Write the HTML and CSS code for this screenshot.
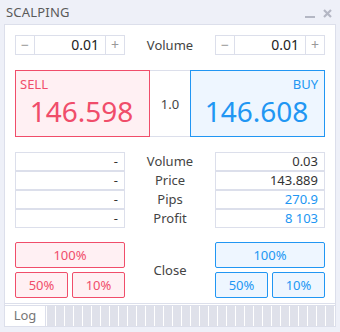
FILE: index.html
```html
<!DOCTYPE html>
<html lang="en">
<head>
  <meta charset="UTF-8">
  <title>Scalping</title>
  <link rel="stylesheet" href="styles.css">
</head>
<body>
  <div class="window">
    <div class="titlebar">
      <span class="title">SCALPING</span>
      <span class="controls">
        <svg width="30" height="12" viewBox="0 0 30 12">
          <rect x="1" y="8" width="10" height="2" fill="#b4b7c4"/>
          <path d="M20 2 L27 9 M27 2 L20 9" stroke="#b4b7c4" stroke-width="2.2"/>
        </svg>
      </span>
    </div>

    <div class="frame">
      <div class="content">
        <!-- volume steppers -->
        <div class="row">
          <div class="stepper">
            <span class="step">&minus;</span>
            <span class="step-value">0.01</span>
            <span class="step">+</span>
          </div>
          <div class="label">Volume</div>
          <div class="stepper">
            <span class="step">&minus;</span>
            <span class="step-value">0.01</span>
            <span class="step">+</span>
          </div>
        </div>

        <!-- quotes -->
        <div class="quotes">
          <div class="quote sell">
            <div class="quote-side">SELL</div>
            <div class="quote-price">146.598</div>
          </div>
          <div class="spread">1.0</div>
          <div class="quote buy">
            <div class="quote-side">BUY</div>
            <div class="quote-price">146.608</div>
          </div>
        </div>

        <!-- positions -->
        <div class="table">
          <div class="row tight">
            <div class="cell">-</div>
            <div class="label">Volume</div>
            <div class="cell">0.03</div>
          </div>
          <div class="row tight">
            <div class="cell">-</div>
            <div class="label">Price</div>
            <div class="cell">143.889</div>
          </div>
          <div class="row tight">
            <div class="cell">-</div>
            <div class="label">Pips</div>
            <div class="cell blue">270.9</div>
          </div>
          <div class="row tight">
            <div class="cell">-</div>
            <div class="label">Profit</div>
            <div class="cell blue">8 103</div>
          </div>
        </div>

        <!-- close buttons -->
        <div class="row close-row">
          <div class="close-group red">
            <button class="btn wide">100%</button>
            <button class="btn">50%</button>
            <button class="btn">10%</button>
          </div>
          <div class="label">Close</div>
          <div class="close-group blue">
            <button class="btn wide">100%</button>
            <button class="btn">50%</button>
            <button class="btn">10%</button>
          </div>
        </div>
      </div>

      <div class="logbar">
        <div class="log-tab">Log</div>
        <div class="log-strip" id="strip"></div>
      </div>
    </div>
  </div>

  <script>
    // fill the log strip with little blocks
    var strip = document.getElementById('strip');
    for (var i = 0; i < 32; i++) {
      var b = document.createElement('span');
      b.className = 'block';
      strip.appendChild(b);
    }
  </script>
</body>
</html>
```

FILE: styles.css
```css
body {
  margin: 0;
  font-family: 'Noto Sans', 'DejaVu Sans', sans-serif;
  color: #444;
}
.window {
  width: 340px;
  height: 332px;
  background-color: #eef0f8;
  box-sizing: border-box;
  padding-bottom: 5px;
  display: flex;
  flex-direction: column;
}
.titlebar {
  height: 24px;
  display: flex;
  justify-content: space-between;
  align-items: center;
  padding: 0 6px 0 6px;
}
.title {
  font-size: 13px;
  color: #5a5a5a;
  letter-spacing: 0.2px;
}
.controls svg {
  display: block;
  margin-top: 3px;
}
.frame {
  margin: 0 4px;
  flex: 1;
  background-color: #fff;
  border: 1px solid #dcdfeb;
  display: flex;
  flex-direction: column;
}
.content {
  flex: 1;
  padding: 10px 10px 0 10px;
}
.row {
  display: flex;
  align-items: center;
  height: 20px;
}
.row.tight {
  height: 19px;
}
.label {
  flex: 1;
  text-align: center;
  font-size: 13px;
  color: #444;
}

/* steppers */
.stepper {
  width: 110px;
  height: 20px;
  display: flex;
  border: 1px solid #dcdfeb;
  box-sizing: border-box;
}
.step {
  width: 18px;
  text-align: center;
  font-size: 14px;
  line-height: 18px;
  color: #999;
}
.step-value {
  flex: 1;
  border-left: 1px solid #dcdfeb;
  border-right: 1px solid #dcdfeb;
  text-align: right;
  padding-right: 6px;
  font-size: 14px;
  line-height: 18px;
  color: #222;
}

/* quotes */
.quotes {
  display: flex;
  margin-top: 15px;
  height: 67px;
}
.quote {
  width: 135px;
  box-sizing: border-box;
  border: 1px solid;
  padding: 6px 6px 0 4px;
}
.sell {
  background-color: #fff0f3;
  border-color: #f04d6a;
  color: #f04d6a;
}
.buy {
  background-color: #eef6ff;
  border-color: #2196f3;
  color: #2196f3;
}
.buy .quote-side {
  text-align: right;
}
.quote-side {
  font-size: 13px;
  line-height: 14px;
}
.quote-price {
  font-size: 28px;
  line-height: 28px;
  margin-top: 6px;
  text-align: center;
}
.spread {
  flex: 1;
  border-top: 1px solid #dcdfeb;
  border-bottom: 1px solid #dcdfeb;
  display: flex;
  align-items: center;
  justify-content: center;
  font-size: 13px;
}

/* table */
.table {
  margin-top: 14px;
}
.cell {
  width: 110px;
  height: 19px;
  box-sizing: border-box;
  border: 1px solid #dcdfeb;
  margin-bottom: -1px;
  text-align: right;
  padding-right: 6px;
  font-size: 13px;
  line-height: 17px;
  color: #333;
}
.cell.blue {
  color: #2196f3;
}

/* close */
.close-row {
  margin-top: 15px;
  height: 56px;
}
.close-group {
  width: 110px;
  display: flex;
  flex-wrap: wrap;
  gap: 4px;
}
.btn {
  width: 53px;
  height: 26px;
  border: 1px solid;
  border-radius: 2px;
  font-family: inherit;
  font-size: 13px;
  padding: 0;
}
.btn.wide {
  width: 110px;
}
.close-group.red .btn {
  background-color: #fff0f3;
  border-color: #f04d6a;
  color: #f04d6a;
}
.close-group.blue .btn {
  background-color: #eef6ff;
  border-color: #2196f3;
  color: #2196f3;
}

/* log */
.logbar {
  display: flex;
  height: 20px;
  border-top: 3px double #dcdfeb;
}
.log-tab {
  width: 40px;
  text-align: center;
  font-size: 13px;
  line-height: 19px;
  color: #777;
  border-right: 1px solid #dcdfeb;
}
.log-strip {
  flex: 1;
  display: flex;
  gap: 1px;
  padding-left: 1px;
  overflow: hidden;
}
.block {
  width: 8px;
  flex: none;
  background-color: #dfe1ea;
}
```
